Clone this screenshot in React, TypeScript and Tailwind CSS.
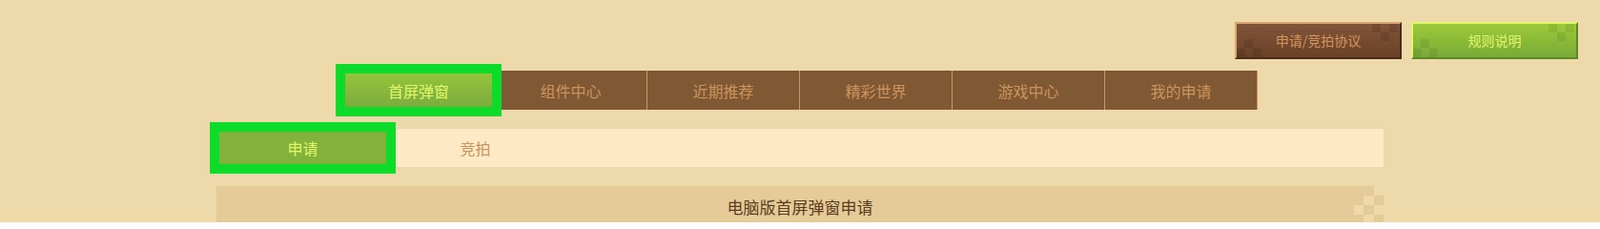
import React from 'react';

const mainTabs: string[] = ['首屏弹窗', '组件中心', '近期推荐', '精彩世界', '游戏中心', '我的申请'];
const subTabs: string[] = ['申请', '竞拍'];

// pixel texture drawn over the buttons (top right cluster + bottom left cluster)
const ButtonTexture: React.FC<{ fill: string; opacity: number }> = ({ fill, opacity }) => (
  <svg className="pointer-events-none absolute inset-0 h-full w-full" viewBox="0 0 171 35" preserveAspectRatio="none">
    <g fill={fill} fillOpacity={opacity}>
      <rect x="142" y="0" width="9" height="9" />
      <rect x="160" y="0" width="9" height="9" />
      <rect x="151" y="9" width="9" height="9" />
      <rect x="8" y="16" width="9" height="9" />
      <rect x="0" y="26" width="9" height="9" />
      <rect x="17" y="26" width="9" height="9" />
    </g>
  </svg>
);

const BrownButton: React.FC = () => (
  <button className="relative flex h-[39px] w-[175px] items-center justify-center overflow-hidden border-2 border-t-[#d9a66f] border-l-[#d9a66f] border-b-[#4a2c18] border-r-[#4a2c18] bg-gradient-to-b from-[#81553a] to-[#6a4128] text-[14px] text-[#d4955c]">
    <ButtonTexture fill="#000" opacity={0.1} />
    <span className="relative">申请/竞拍协议</span>
  </button>
);

const GreenButton: React.FC = () => (
  <button className="relative flex h-[39px] w-[175px] items-center justify-center overflow-hidden border-2 border-t-[#e2f66c] border-l-[#e2f66c] border-b-[#5a8a24] border-r-[#5a8a24] bg-gradient-to-b from-[#9cca3a] to-[#79aa36] text-[14px] text-[#e2f56b]">
    <ButtonTexture fill="#000" opacity={0.07} />
    <span className="relative">规则说明</span>
  </button>
);

export default function App() {
  return (
    <div className="h-[233px] w-full overflow-hidden bg-[#eed9ab] font-['Noto_Sans_CJK_SC','Noto_Sans',sans-serif]">
      {/* top right action buttons */}
      <div className="flex justify-end gap-[10px] pr-[23px] pt-[23px]">
        <BrownButton />
        <GreenButton />
      </div>

      <div className="mx-auto w-[1224px]">
        {/* main tabs */}
        <div className="mt-[12px] flex justify-center">
          {mainTabs.map((tab, index) =>
            index === 0 ? (
              <div
                key={tab}
                className="relative z-10 flex h-[41px] w-[160px] items-center justify-center bg-gradient-to-b from-[#96c63a] to-[#7aaa3e] text-[16px] text-[#e2f66c] outline-[10px] outline-offset-[-3px] outline-[#0cdc29] outline-solid"
              >
                {tab}
              </div>
            ) : (
              <div
                key={tab}
                className="flex h-[41px] w-[160px] items-center justify-center border-r border-[#c99762] bg-[#7f5834] text-[16px] text-[#cc945c]"
              >
                {tab}
              </div>
            )
          )}
        </div>

        {/* sub tabs */}
        <div className="mt-[20px] flex h-[40px] bg-[#fde9c3]">
          {subTabs.map((tab, index) =>
            index === 0 ? (
              <div
                key={tab}
                className="relative z-10 flex h-[40px] w-[181px] items-center justify-center bg-[#82b23b] text-[16px] text-[#e2f66c] outline-[10px] outline-offset-[-3px] outline-[#0cdc29] outline-solid"
              >
                {tab}
              </div>
            ) : (
              <div key={tab} className="flex h-[40px] w-[181px] items-center justify-center text-[16px] text-[#c99460]">
                {tab}
              </div>
            )
          )}
        </div>

        {/* section header */}
        <div className="relative mt-[20px] flex h-[44px] items-center justify-center bg-[#e4cb97] text-[17px] text-[#5b3b1f]">
          电脑版首屏弹窗申请
          {/* notched pixel corner */}
          <svg className="absolute right-0 top-0 h-[40px] w-[31px]" viewBox="0 0 31 40">
            <g fill="#eed9ab">
              <rect x="21" y="0" width="10" height="10" />
              <rect x="10" y="10" width="11" height="10" />
              <rect x="0" y="20" width="10" height="10" />
              <rect x="21" y="20" width="10" height="10" />
              <rect x="10" y="30" width="11" height="10" />
            </g>
          </svg>
        </div>
      </div>
    </div>
  );
}
